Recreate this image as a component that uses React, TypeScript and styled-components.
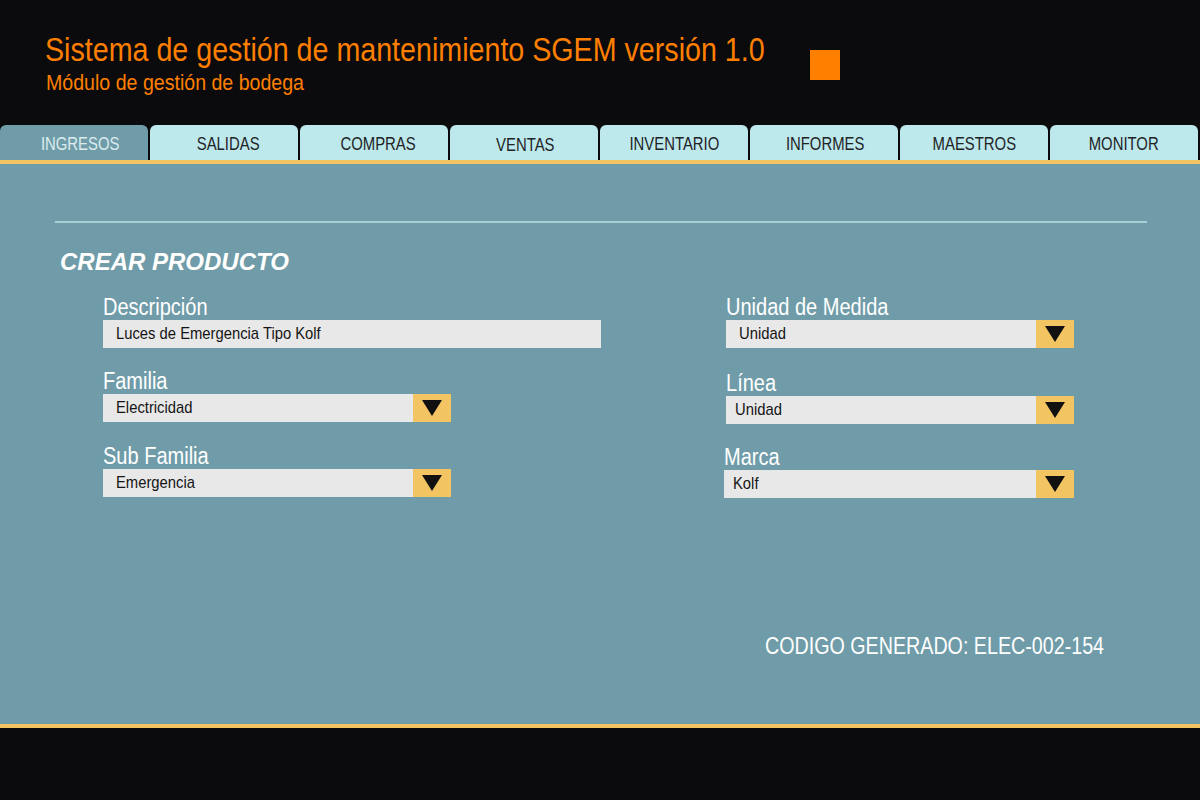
import React from "react"
import styled, { createGlobalStyle } from "styled-components"

const GlobalStyle = createGlobalStyle`
    html, body {
        margin: 0;
        padding: 0;
        background: #0b0b0d;
    }
    body {
        font-family: "Liberation Sans", Arial, sans-serif;
    }
`

// the reference uses a narrow grotesque; Liberation Sans squeezed to that width
const Narrow = styled.span<{ origin?: string; scale?: number }>`
    display: inline-block;
    white-space: nowrap;
    transform: scaleX(${p => p.scale || 0.87});
    transform-origin: ${p => p.origin || "left"} center;
`

const Page = styled.div`
    width: 1200px;
    height: 800px;
    background: #0b0b0d;
    display: flex;
    flex-direction: column;
    overflow: hidden;
`

const Header = styled.header`
    height: 125px;
    display: flex;
    align-items: flex-start;
    padding: 0 0 0 45px;
    box-sizing: border-box;
`

const Titles = styled.div`
    width: 765px;
    padding-top: 30px;
    color: #ff7f00;
`

const Title = styled.h1`
    margin: 0;
    font-weight: normal;
    font-size: 33px;
    line-height: 40px;
`

const Subtitle = styled.h2`
    margin: 0 0 0 1px;
    font-weight: normal;
    font-size: 22px;
    line-height: 26px;
`

const Square = styled.div`
    width: 30px;
    height: 30px;
    background: #ff7f00;
    margin: 50px 0 0 0;
`

const Tabs = styled.nav`
    display: flex;
    gap: 2px;
    height: 35px;
`

const Tab = styled.div<{ active?: boolean; nudge?: number; drop?: number }>`
    width: 148px;
    display: flex;
    align-items: center;
    justify-content: center;
    padding-top: ${p => 3 + (p.drop || 0)}px;
    padding-left: ${p => (p.nudge || 0) * 2}px;
    box-sizing: border-box;
    border-radius: 6px 6px 0 0;
    font-size: 19px;
    background: ${p => (p.active ? "#6f9ca8" : "#bde8ec")};
    color: ${p => (p.active ? "#dcecef" : "#1e2426")};
`

const Panel = styled.main`
    height: 568px;
    box-sizing: border-box;
    background: #6f9ca8;
    border-top: 4px solid #f2c462;
    border-bottom: 4px solid #f2c462;
    padding: 57px 53px 0 55px;
    position: relative;
`

const Rule = styled.hr`
    margin: 0;
    border: none;
    height: 2px;
    background: #a6cfd6;
`

const SectionTitle = styled.h3`
    margin: 24px 0 0 5px;
    color: #ffffff;
    font-style: italic;
    font-weight: bold;
    font-size: 24px;
    line-height: 30px;
`

const Columns = styled.div`
    display: flex;
    margin-top: 17px;
    padding-left: 48px;
`

const Column = styled.div<{ width: number }>`
    width: ${p => p.width}px;
    display: flex;
    flex-direction: column;
    gap: 20px;
`

const Field = styled.div<{ shift?: number; top?: number }>`
    display: flex;
    flex-direction: column;
    margin-left: ${p => p.shift || 0}px;
    margin-top: ${p => p.top || 0}px;
`

const Label = styled.label`
    color: #ffffff;
    font-size: 23px;
    line-height: 26px;
    height: 26px;
`

const Input = styled.div<{ width: number }>`
    width: ${p => p.width}px;
    height: 28px;
    background: #e8e8e8;
    display: flex;
    align-items: center;
    padding-left: 13px;
    box-sizing: border-box;
    color: #151515;
    font-size: 17px;
`

const Select = styled.div<{ width: number }>`
    width: ${p => p.width}px;
    height: 28px;
    background: #e8e8e8;
    display: flex;
    align-items: center;
    box-sizing: border-box;
    color: #151515;
    font-size: 17px;
`

const SelectValue = styled.span<{ pad: number }>`
    flex: 1;
    padding-left: ${p => p.pad}px;
`

const Arrow = styled.div`
    width: 38px;
    height: 28px;
    background: #f2c462;
    display: flex;
    align-items: center;
    justify-content: center;
`

const Code = styled.div`
    position: absolute;
    left: 765px;
    top: 468px;
    color: #ffffff;
    font-size: 24px;
`

const Footer = styled.footer`
    flex: 1;
`

const Triangle = () => (
    <svg width="22" height="18" viewBox="0 0 22 18">
        <polygon points="1,1 21,1 11,17" fill="#111" />
    </svg>
)

interface DropProps {
    label: string
    value: string
    width: number
    pad?: number
    shift?: number
    top?: number
}

const Dropdown = ({ label, value, width, pad = 13, shift, top }: DropProps) => (
    <Field shift={shift} top={top}>
        <Label><Narrow>{label}</Narrow></Label>
        <Select width={width}>
            <SelectValue pad={pad}><Narrow>{value}</Narrow></SelectValue>
            <Arrow>
                <Triangle />
            </Arrow>
        </Select>
    </Field>
)

const tabs = [
    { name: "INGRESOS", nudge: 6 },
    { name: "SALIDAS", nudge: 4 },
    { name: "COMPRAS", nudge: 4 },
    { name: "VENTAS", nudge: 1, drop: 2 },
    { name: "INVENTARIO" },
    { name: "INFORMES", nudge: 1 },
    { name: "MAESTROS" },
    { name: "MONITOR" },
]

const App = () => {
    return (
        <Page>
            <GlobalStyle />
            <Header>
                <Titles>
                    <Title><Narrow scale={0.868}>Sistema de gestión de mantenimiento SGEM versión 1.0</Narrow></Title>
                    <Subtitle><Narrow scale={0.89}>Módulo de gestión de bodega</Narrow></Subtitle>
                </Titles>
                <Square />
            </Header>
            <Tabs>
                {tabs.map((t, i) => (
                    <Tab key={t.name} active={i === 0} nudge={t.nudge} drop={t.drop}>
                        <Narrow origin="center" scale={0.783}>{t.name}</Narrow>
                    </Tab>
                ))}
            </Tabs>
            <Panel>
                <Rule />
                <SectionTitle>CREAR PRODUCTO</SectionTitle>
                <Columns>
                    <Column width={623}>
                        <Field>
                            <Label><Narrow>Descripción</Narrow></Label>
                            <Input width={498}><Narrow>Luces de Emergencia Tipo Kolf</Narrow></Input>
                        </Field>
                        <Dropdown label="Familia" value="Electricidad" width={348} />
                        <Dropdown label="Sub Familia" value="Emergencia" width={348} top={1} />
                    </Column>
                    <Column width={350}>
                        <Dropdown label="Unidad de Medida" value="Unidad" width={348} />
                        <Dropdown label="Línea" value="Unidad" width={348} pad={9} top={2} />
                        <Dropdown label="Marca" value="Kolf" width={350} pad={9} shift={-2} />
                    </Column>
                </Columns>
                <Code><Narrow scale={0.82}>CODIGO GENERADO: ELEC-002-154</Narrow></Code>
            </Panel>
            <Footer />
        </Page>
    )
}

export default App
